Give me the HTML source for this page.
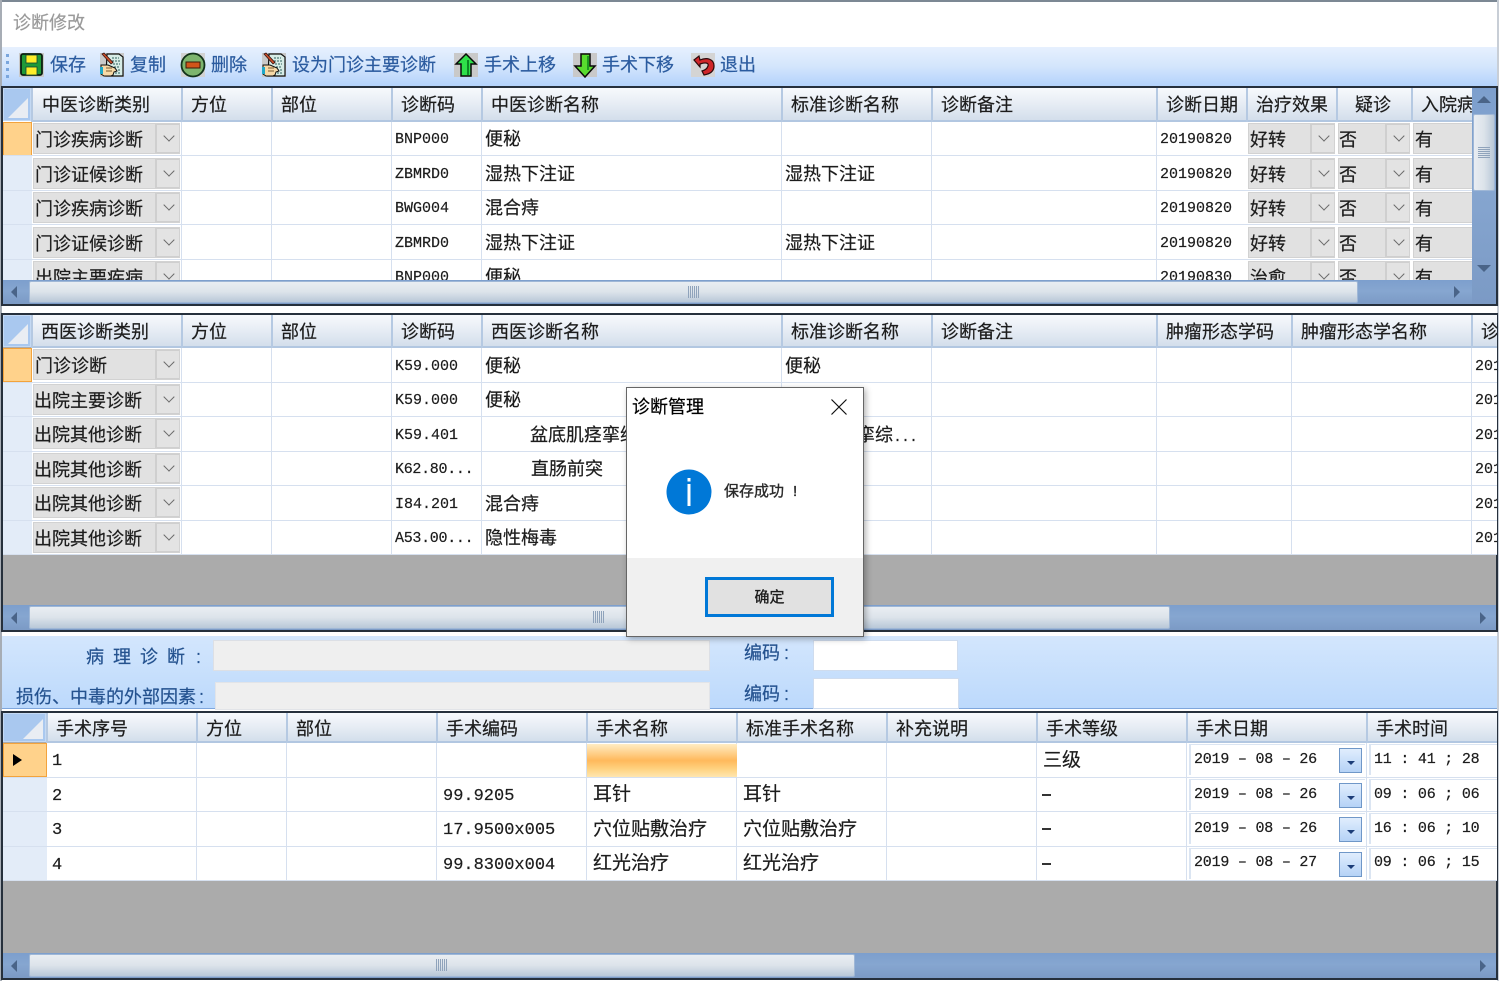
<!DOCTYPE html>
<html><head><meta charset="utf-8"><title>诊断修改</title>
<style>
*{box-sizing:border-box}
html,body{margin:0;padding:0;background:#fff}
body{width:1499px;height:981px;position:relative;overflow:hidden;font:18px/36px "Liberation Sans","Noto Sans CJK SC",sans-serif;color:#1c1c1c;-webkit-text-stroke:.2px;filter:blur(.3px)}
div,span,s,u,em,b{position:absolute;display:block;text-decoration:none;font-style:normal;font-weight:400;white-space:nowrap}
.m{font-family:"Liberation Mono","Noto Sans CJK SC",monospace;font-size:15px;margin-top:1px}
.n{font-size:17px}
.d{white-space:pre;letter-spacing:-.22px}
.tb{color:#2b5b9f;top:47px;line-height:36px;height:34px}
.clip{overflow:hidden}
.bar{background:linear-gradient(#7d9fcd,#86a6d0 45%,#7b9ac5)}
.th{background:linear-gradient(#e9edf2,#dce3ea 50%,#b9c8d8);border:1px solid #9fb7d6;border-radius:2px}
.hd{background:linear-gradient(#f7f9fc,#e6ecf4 50%,#d3deeb);border-bottom:2px solid #b2c7e1}
.hs{top:0;width:2px;background:#b5c9e2}
.v{width:1px;background:#d6e0ef}
.h{height:1px;background:#d6e0ef}
.rh{background:#e3ecf8}
.cur{background:#ffd28b;border:1px solid #f3a33c}
.cor{background:#a9c8ef;border:1px solid #c4d9f3}
.cor:after{content:"";position:absolute;right:2px;bottom:2px;border-left:20px solid transparent;border-bottom:20px solid #e9edf3}
.cb{background:#e1e1e1;height:31px;line-height:32px;overflow:hidden;border:1px solid #d2d2d2;padding-left:1px}
.cb em{right:0;top:0;width:24px;height:29px;background:#e3e3e3;border:2px solid #cfcfcf;border-width:1px 0 1px 2px}
.cb em:after{content:"";position:absolute;left:8px;top:7px;width:7px;height:7px;border:solid #6b6b6b;border-width:0 1px 1px 0;transform:rotate(45deg)}
.lb{color:#24528f}
.dp{background:#fff;border:1px solid #dbe5f2;border-width:1px 0 0 2px;height:31px}
.bt{left:1339px;width:23px;height:25px;background:linear-gradient(#e0edfd,#b5d2f6);border:1px solid #6f97c8}
.bt:after{content:"";position:absolute;left:7px;top:12px;border:4px solid transparent;border-top:4px solid #1c3d78;border-bottom:0}
.al{width:0;height:0;border:6px solid transparent}
.ds{left:1042px;width:9px;height:2px;background:#333}
</style></head><body>

<!-- window frame -->
<div style="left:0;top:0;width:1499px;height:2px;background:#7c8894"></div>
<div style="left:0;top:0;width:2px;height:981px;background:#a7adb5"></div>
<div style="left:1497px;top:0;width:2px;height:981px;background:#c8ced6"></div>
<div style="left:13px;top:5px;color:#9a9a9a">诊断修改</div>

<!-- toolbar -->
<div style="left:2px;top:47px;width:1495px;height:39px;background:linear-gradient(#e6f0fe,#d3e5fc 50%,#b3d2fb)"></div>
<div style="left:6px;top:54px;width:3px;height:3px;background:#7aa6dd;box-shadow:0 7px 0 #7aa6dd,0 14px 0 #7aa6dd,0 21px 0 #7aa6dd"></div>

<svg style="position:absolute;left:0;top:0" width="1499" height="90" viewBox="0 0 1499 90">
<defs>
<g id="doc"><rect width="24" height="24" fill="#c9c9c9"/><path d="M7 1h12l4 3v19H6z" fill="#d7ece6" stroke="#111" stroke-width="1.2"/><path d="M12 5h7M12 8h8M13 11h7M14 14h6M15 17h5M15 20h5" stroke="#2e5f5c" stroke-dasharray="2 1"/><path d="M2 1l9 10 2-1.500L4 0z" fill="#d0512a" stroke="#311" stroke-width=".8"/><path d="M1 12h7l7 3 2 3-3 1-1 3-2 1H4l-3-2z" fill="#f7d9a6" stroke="#111"/><path d="M6 15h6M6 18h6" stroke="#7a5a30"/><rect x="0" y="14" width="3" height="7" fill="#1fa8c8"/></g>
</defs>
<!-- save -->
<rect x="19" y="53" width="25" height="24" fill="#c9c9c9"/>
<rect x="21" y="54" width="21" height="21" rx="2" fill="#1f9a38" stroke="#0b1f10" stroke-width="1.8"/>
<rect x="26" y="55" width="11" height="8" fill="#ffee2a" stroke="#143" stroke-width=".8"/>
<rect x="26" y="67" width="11" height="8" fill="#ffee2a" stroke="#143" stroke-width=".8"/>
<use href="#doc" x="100" y="53"/>
<!-- delete -->
<rect x="181" y="53" width="24" height="24" fill="#d2d2d2"/>
<circle cx="193" cy="65" r="11.500" fill="#7db56e" stroke="#12321a" stroke-width="1.800"/>
<rect x="186" y="62" width="14" height="6" fill="#d0551a" stroke="#3b1a08"/>
<use href="#doc" x="262" y="53"/>
<!-- up -->
<rect x="454" y="53" width="24" height="24" fill="#c9c9c9"/>
<path d="M466 54l10 10h-5v12h-10V64h-5z" fill="#2fe04a" stroke="#0a0a0a" stroke-width="1.500"/>
<path d="M468 60v15" stroke="#0c8a24" stroke-width="2"/>
<!-- down -->
<rect x="573" y="53" width="24" height="24" fill="#c9c9c9"/>
<path d="M581 54h9v12h5l-10 11-10-11h6z" fill="#58dc2e" stroke="#0a0a0a" stroke-width="1.500"/>
<path d="M588 56v14" stroke="#1c9a20" stroke-width="2"/>
<!-- exit -->
<rect x="691" y="53" width="24" height="24" fill="#d4d4d4"/>
<path d="M694 60l6 7v-3c6-2 9-1 8 2-1 3-3 4-6 5l2 4c6-1 10-4 10-9 0-7-7-9-14-6l-1-4z" fill="#d0262a" stroke="#2a0a0c" stroke-width="1.200"/>
</svg>
<div class="tb" style="left:50px">保存</div>
<div class="tb" style="left:130px">复制</div>
<div class="tb" style="left:211px">删除</div>
<div class="tb" style="left:292px">设为门诊主要诊断</div>
<div class="tb" style="left:484px">手术上移</div>
<div class="tb" style="left:602px">手术下移</div>
<div class="tb" style="left:720px">退出</div>

<!-- GRID 1 -->
<div style="left:1px;top:86px;width:1497px;height:220px;background:#fff;border:2px solid #26303c"></div>
<div class="clip" style="left:3px;top:88px;width:1469px;height:192px;">
<div style="left:-3px;top:-88px;width:1499px;height:400px">
 <div class="hd" style="left:32px;top:88px;width:1440px;height:34px"></div>
 <div class="cor" style="left:3px;top:88px;width:28px;height:33px"></div>
 <div class="rh" style="left:3px;top:122px;width:29px;height:160px"></div>
 <div class="cur" style="left:3px;top:122px;width:29px;height:34px"></div>
 <div class="hs" style="left:31px;top:88px;height:34px"></div><div class="hs" style="left:181px;top:88px;height:34px"></div><div class="hs" style="left:271px;top:88px;height:34px"></div><div class="hs" style="left:391px;top:88px;height:34px"></div><div class="hs" style="left:481px;top:88px;height:34px"></div><div class="hs" style="left:781px;top:88px;height:34px"></div><div class="hs" style="left:931px;top:88px;height:34px"></div><div class="hs" style="left:1156px;top:88px;height:34px"></div><div class="hs" style="left:1246px;top:88px;height:34px"></div><div class="hs" style="left:1336px;top:88px;height:34px"></div><div class="hs" style="left:1411px;top:88px;height:34px"></div>
 <u class="v" style="left:181px;top:122px;height:160px"></u><u class="v" style="left:271px;top:122px;height:160px"></u><u class="v" style="left:391px;top:122px;height:160px"></u><u class="v" style="left:481px;top:122px;height:160px"></u><u class="v" style="left:781px;top:122px;height:160px"></u><u class="v" style="left:931px;top:122px;height:160px"></u><u class="v" style="left:1156px;top:122px;height:160px"></u>
 <u class="h" style="left:3px;top:155px;width:1470px"></u><u class="h" style="left:3px;top:190px;width:1470px"></u><u class="h" style="left:3px;top:224px;width:1470px"></u><u class="h" style="left:3px;top:259px;width:1470px"></u>
 <div style="left:42px;top:87px">中医诊断类别</div><div style="left:191px;top:87px">方位</div><div style="left:281px;top:87px">部位</div><div style="left:401px;top:87px">诊断码</div><div style="left:491px;top:87px">中医诊断名称</div><div style="left:791px;top:87px">标准诊断名称</div><div style="left:941px;top:87px">诊断备注</div><div style="left:1166px;top:87px">诊断日期</div><div style="left:1256px;top:87px">治疗效果</div><div style="left:1355px;top:87px">疑诊</div><div style="left:1421px;top:87px">入院病情</div>

 <s class="cb" style="left:33px;top:123px;width:147px">门诊疾病诊断<em></em></s><div class="m" style="left:395px;top:121px">BNP000</div><div style="left:485px;top:121px">便秘</div><div class="m" style="left:1160px;top:121px">20190820</div><s class="cb" style="left:1248px;top:123px;width:87px">好转<em></em></s><s class="cb" style="left:1338px;top:123px;width:72px;padding-left:0">否<em></em></s><s class="cb" style="left:1413px;top:123px;width:62px">有</s>

 <s class="cb" style="left:33px;top:158px;width:147px">门诊证候诊断<em></em></s><div class="m" style="left:395px;top:156px">ZBMRD0</div><div style="left:485px;top:156px">湿热下注证</div><div style="left:785px;top:156px">湿热下注证</div><div class="m" style="left:1160px;top:156px">20190820</div><s class="cb" style="left:1248px;top:158px;width:87px">好转<em></em></s><s class="cb" style="left:1338px;top:158px;width:72px;padding-left:0">否<em></em></s><s class="cb" style="left:1413px;top:158px;width:62px">有</s>

 <s class="cb" style="left:33px;top:192px;width:147px">门诊疾病诊断<em></em></s><div class="m" style="left:395px;top:190px">BWG004</div><div style="left:485px;top:190px">混合痔</div><div class="m" style="left:1160px;top:190px">20190820</div><s class="cb" style="left:1248px;top:192px;width:87px">好转<em></em></s><s class="cb" style="left:1338px;top:192px;width:72px;padding-left:0">否<em></em></s><s class="cb" style="left:1413px;top:192px;width:62px">有</s>

 <s class="cb" style="left:33px;top:227px;width:147px">门诊证候诊断<em></em></s><div class="m" style="left:395px;top:225px">ZBMRD0</div><div style="left:485px;top:225px">湿热下注证</div><div style="left:785px;top:225px">湿热下注证</div><div class="m" style="left:1160px;top:225px">20190820</div><s class="cb" style="left:1248px;top:227px;width:87px">好转<em></em></s><s class="cb" style="left:1338px;top:227px;width:72px;padding-left:0">否<em></em></s><s class="cb" style="left:1413px;top:227px;width:62px">有</s>

 <s class="cb" style="left:33px;top:261px;width:147px">出院主要疾病<em></em></s><div class="m" style="left:395px;top:259px">BNP000</div><div style="left:485px;top:259px">便秘</div><div class="m" style="left:1160px;top:259px">20190830</div><s class="cb" style="left:1248px;top:261px;width:87px">治愈<em></em></s><s class="cb" style="left:1338px;top:261px;width:72px;padding-left:0">否<em></em></s><s class="cb" style="left:1413px;top:261px;width:62px">有</s>
</div></div>
<div class="bar" style="left:3px;top:280px;width:1493px;height:24px"></div>
<div class="bar" style="left:1472px;top:88px;width:24px;height:216px"></div>
<div class="th" style="left:29px;top:281px;width:1329px;height:22px"></div>
<div style="left:688px;top:286px;width:11px;height:12px;background:repeating-linear-gradient(90deg,#8fa3bb 0 1px,transparent 1px 2px)"></div>
<div class="th" style="left:1473px;top:114px;width:22px;height:77px;background:linear-gradient(90deg,#e9edf2,#dce3ea 50%,#b9c8d8)"></div>
<div style="left:1478px;top:147px;width:12px;height:11px;background:repeating-linear-gradient(#8fa3bb 0 1px,transparent 1px 2px)"></div>
<div class="al" style="left:1477px;top:96px;border-width:7px;border-bottom-color:#4a6488;border-top:0"></div>
<div class="al" style="left:1477px;top:265px;border-width:7px;border-top-color:#4a6488;border-bottom:0"></div>
<div class="al" style="left:11px;top:286px;border-right-color:#4a6488;border-left:0"></div>
<div class="al" style="left:1454px;top:286px;border-left-color:#4a6488;border-right:0"></div>

<!-- GRID 2 -->
<div style="left:1px;top:313px;width:1497px;height:319px;background:#ababab;border:2px solid #26303c"></div>
<div class="clip" style="left:3px;top:315px;width:1494px;height:290px;">
<div style="left:-3px;top:-315px;width:1499px;height:700px">
 <div style="left:32px;top:348px;width:1470px;height:207px;background:#fff"></div>
 <div class="hd" style="left:32px;top:315px;width:1470px;height:33px"></div>
 <div class="cor" style="left:3px;top:315px;width:28px;height:32px"></div>
 <div class="rh" style="left:3px;top:348px;width:29px;height:207px"></div>
 <div class="cur" style="left:3px;top:348px;width:29px;height:34px"></div>
 <div class="hs" style="left:31px;top:315px;height:33px"></div><div class="hs" style="left:181px;top:315px;height:33px"></div><div class="hs" style="left:271px;top:315px;height:33px"></div><div class="hs" style="left:391px;top:315px;height:33px"></div><div class="hs" style="left:481px;top:315px;height:33px"></div><div class="hs" style="left:781px;top:315px;height:33px"></div><div class="hs" style="left:931px;top:315px;height:33px"></div><div class="hs" style="left:1156px;top:315px;height:33px"></div><div class="hs" style="left:1291px;top:315px;height:33px"></div><div class="hs" style="left:1471px;top:315px;height:33px"></div>
 <u class="v" style="left:181px;top:348px;height:207px"></u><u class="v" style="left:271px;top:348px;height:207px"></u><u class="v" style="left:391px;top:348px;height:207px"></u><u class="v" style="left:481px;top:348px;height:207px"></u><u class="v" style="left:781px;top:348px;height:207px"></u><u class="v" style="left:931px;top:348px;height:207px"></u><u class="v" style="left:1156px;top:348px;height:207px"></u><u class="v" style="left:1291px;top:348px;height:207px"></u><u class="v" style="left:1471px;top:348px;height:207px"></u>
 <u class="h" style="left:3px;top:382px;width:1494px"></u><u class="h" style="left:3px;top:416px;width:1494px"></u><u class="h" style="left:3px;top:451px;width:1494px"></u><u class="h" style="left:3px;top:485px;width:1494px"></u><u class="h" style="left:3px;top:520px;width:1494px"></u><u class="h" style="left:3px;top:554px;width:1494px"></u>
 <div style="left:41px;top:314px">西医诊断类别</div><div style="left:191px;top:314px">方位</div><div style="left:281px;top:314px">部位</div><div style="left:401px;top:314px">诊断码</div><div style="left:491px;top:314px">西医诊断名称</div><div style="left:791px;top:314px">标准诊断名称</div><div style="left:941px;top:314px">诊断备注</div><div style="left:1166px;top:314px">肿瘤形态学码</div><div style="left:1301px;top:314px">肿瘤形态学名称</div><div style="left:1481px;top:314px">诊断日期</div>

 <s class="cb" style="left:33px;top:349px;width:147px">门诊诊断<em></em></s><div class="m" style="left:395px;top:348px">K59.000</div><div style="left:485px;top:348px">便秘</div><div style="left:785px;top:348px">便秘</div><div class="m" style="left:1475px;top:348px">20190820</div>
 <s class="cb" style="left:33px;top:384px;width:147px;padding-left:0">出院主要诊断<em></em></s><div class="m" style="left:395px;top:382px">K59.000</div><div style="left:485px;top:382px">便秘</div><div class="m" style="left:1475px;top:382px">20190820</div>
 <s class="cb" style="left:33px;top:418px;width:147px;padding-left:0">出院其他诊断<em></em></s><div class="m" style="left:395px;top:417px">K59.401</div><div style="left:530px;top:417px">盆底肌痉挛综合征</div><div style="left:785px;top:417px">盆底肌痉挛综</div><div style="left:895px;top:417px;letter-spacing:3px">...</div><div class="m" style="left:1475px;top:417px">20190820</div>
 <s class="cb" style="left:33px;top:453px;width:147px;padding-left:0">出院其他诊断<em></em></s><div class="m" style="left:395px;top:451px;letter-spacing:-.3px">K62.80...</div><div style="left:531px;top:451px">直肠前突</div><div class="m" style="left:1475px;top:451px">20190820</div>
 <s class="cb" style="left:33px;top:487px;width:147px;padding-left:0">出院其他诊断<em></em></s><div class="m" style="left:395px;top:486px">I84.201</div><div style="left:485px;top:486px">混合痔</div><div class="m" style="left:1475px;top:486px">20190820</div>
 <s class="cb" style="left:33px;top:522px;width:147px;padding-left:0">出院其他诊断<em></em></s><div class="m" style="left:395px;top:520px;letter-spacing:-.3px">A53.00...</div><div style="left:485px;top:520px">隐性梅毒</div><div class="m" style="left:1475px;top:520px">20190820</div>
</div></div>
<div class="bar" style="left:3px;top:605px;width:1493px;height:25px"></div>
<div class="th" style="left:29px;top:606px;width:1141px;height:23px"></div>
<div style="left:593px;top:611px;width:11px;height:12px;background:repeating-linear-gradient(90deg,#8fa3bb 0 1px,transparent 1px 2px)"></div>
<div class="al" style="left:11px;top:612px;border-right-color:#4a6488;border-left:0"></div>
<div class="al" style="left:1480px;top:612px;border-left-color:#4a6488;border-right:0"></div>

<!-- panel -->
<div style="left:2px;top:636px;width:1495px;height:73px;background:linear-gradient(#d3e6fd,#bcd9fc);border-bottom:1px solid #7ea6dc"></div>
<div style="left:213px;top:640px;width:497px;height:31px;background:#efefef;border:1px solid #dcdfe5"></div>
<div style="left:215px;top:682px;width:495px;height:28px;background:#efefef;border:1px solid #e2e4e8"></div>
<div style="left:813px;top:640px;width:145px;height:31px;background:#fff;border:1px solid #cfdcee"></div>
<div style="left:813px;top:678px;width:146px;height:31px;background:#fff;border:1px solid #cfdcee"></div>
<div class="lb" style="left:86px;top:639px;letter-spacing:9px">病理诊断</div>
<div class="lb" style="left:196px;top:639px">:</div>
<div class="lb" style="left:16px;top:679px">损伤、中毒的外部因素</div>
<div class="lb" style="left:199px;top:679px">:</div>
<div class="lb" style="left:744px;top:635px">编码</div>
<div class="lb" style="left:784px;top:635px">:</div>
<div class="lb" style="left:744px;top:676px">编码</div>
<div class="lb" style="left:784px;top:676px">:</div>

<!-- GRID 3 -->
<div style="left:1px;top:711px;width:1497px;height:269px;background:#ababab;border:2px solid #26303c"></div>
<div class="clip" style="left:3px;top:713px;width:1494px;height:240px">
<div style="left:-3px;top:-713px;width:1499px;height:981px">
 <div style="left:47px;top:743px;width:1452px;height:138px;background:#fff"></div>
 <div class="hd" style="left:47px;top:713px;width:1452px;height:30px"></div>
 <div class="cor" style="left:3px;top:713px;width:43px;height:29px"></div>
 <div class="rh" style="left:3px;top:743px;width:44px;height:138px"></div>
 <div class="cur" style="left:3px;top:743px;width:44px;height:34px"></div>
 <div class="al" style="left:13px;top:754px;border-left-color:#000;border-right:0;border-width:6px 0 6px 9px"></div>
 <div class="hs" style="left:46px;top:713px;height:30px"></div><div class="hs" style="left:196px;top:713px;height:30px"></div><div class="hs" style="left:286px;top:713px;height:30px"></div><div class="hs" style="left:436px;top:713px;height:30px"></div><div class="hs" style="left:586px;top:713px;height:30px"></div><div class="hs" style="left:736px;top:713px;height:30px"></div><div class="hs" style="left:886px;top:713px;height:30px"></div><div class="hs" style="left:1036px;top:713px;height:30px"></div><div class="hs" style="left:1186px;top:713px;height:30px"></div><div class="hs" style="left:1366px;top:713px;height:30px"></div>
 <u class="v" style="left:196px;top:743px;height:138px"></u><u class="v" style="left:286px;top:743px;height:138px"></u><u class="v" style="left:436px;top:743px;height:138px"></u><u class="v" style="left:586px;top:743px;height:138px"></u><u class="v" style="left:736px;top:743px;height:138px"></u><u class="v" style="left:886px;top:743px;height:138px"></u><u class="v" style="left:1036px;top:743px;height:138px"></u><u class="v" style="left:1186px;top:743px;height:138px"></u><u class="v" style="left:1366px;top:743px;height:138px"></u>
 <u class="h" style="left:3px;top:777px;width:1494px"></u><u class="h" style="left:3px;top:811px;width:1494px"></u><u class="h" style="left:3px;top:846px;width:1494px"></u><u class="h" style="left:3px;top:880px;width:1494px"></u>
 <div style="left:56px;top:711px">手术序号</div><div style="left:206px;top:711px">方位</div><div style="left:296px;top:711px">部位</div><div style="left:446px;top:711px">手术编码</div><div style="left:596px;top:711px">手术名称</div><div style="left:746px;top:711px">标准手术名称</div><div style="left:896px;top:711px">补充说明</div><div style="left:1046px;top:711px">手术等级</div><div style="left:1196px;top:711px">手术日期</div><div style="left:1376px;top:711px">手术时间</div>

 <div style="left:587px;top:744px;width:150px;height:33px;background:linear-gradient(#ffedc4,#ffb95c 50%,#ffd27f 75%,#ffe6b0)"></div>
 <div class="m n" style="left:52px;top:743px">1</div><div style="left:1043px;top:743px;font-size:19px">三级</div>
 <div class="dp" style="left:1189px;top:744px;width:176px"></div><div class="bt" style="top:748px"></div><div class="m d" style="left:1194px;top:741px">2019 – 08 – 26</div>
 <div class="dp" style="left:1369px;top:744px;width:130px"></div><div class="m d" style="left:1374px;top:741px">11 : 41 ; 28</div>

 <div class="m n" style="left:52px;top:778px">2</div><div class="m n" style="left:443px;top:778px">99.9205</div><div style="left:593px;top:777px;font-size:19px">耳针</div><div style="left:743px;top:777px;font-size:19px">耳针</div><div class="ds" style="top:794px"></div>
 <div class="dp" style="left:1189px;top:779px;width:176px"></div><div class="bt" style="top:783px"></div><div class="m d" style="left:1194px;top:776px">2019 – 08 – 26</div>
 <div class="dp" style="left:1369px;top:779px;width:130px"></div><div class="m d" style="left:1374px;top:776px">09 : 06 ; 06</div>

 <div class="m n" style="left:52px;top:812px">3</div><div class="m n" style="left:443px;top:812px">17.9500x005</div><div style="left:593px;top:812px;font-size:19px">穴位贴敷治疗</div><div style="left:743px;top:812px;font-size:19px">穴位贴敷治疗</div><div class="ds" style="top:828px"></div>
 <div class="dp" style="left:1189px;top:813px;width:176px"></div><div class="bt" style="top:817px"></div><div class="m d" style="left:1194px;top:810px">2019 – 08 – 26</div>
 <div class="dp" style="left:1369px;top:813px;width:130px"></div><div class="m d" style="left:1374px;top:810px">16 : 06 ; 10</div>

 <div class="m n" style="left:52px;top:847px">4</div><div class="m n" style="left:443px;top:847px">99.8300x004</div><div style="left:593px;top:846px;font-size:19px">红光治疗</div><div style="left:743px;top:846px;font-size:19px">红光治疗</div><div class="ds" style="top:863px"></div>
 <div class="dp" style="left:1189px;top:848px;width:176px"></div><div class="bt" style="top:852px"></div><div class="m d" style="left:1194px;top:844px">2019 – 08 – 27</div>
 <div class="dp" style="left:1369px;top:848px;width:130px"></div><div class="m d" style="left:1374px;top:844px">09 : 06 ; 15</div>
</div></div>
<div class="bar" style="left:3px;top:953px;width:1493px;height:25px"></div>
<div class="th" style="left:29px;top:954px;width:826px;height:23px"></div>
<div style="left:436px;top:959px;width:11px;height:12px;background:repeating-linear-gradient(90deg,#8fa3bb 0 1px,transparent 1px 2px)"></div>
<div class="al" style="left:11px;top:960px;border-right-color:#4a6488;border-left:0"></div>
<div class="al" style="left:1480px;top:960px;border-left-color:#4a6488;border-right:0"></div>

<!-- dialog -->
<div style="left:626px;top:387px;width:238px;height:250px;background:#fff;border:1px solid #666;box-shadow:2px 2px 6px rgba(0,0,0,.3)">
 <div style="left:0;top:170px;width:236px;height:78px;background:#f0f0f0"></div>
 <div style="left:5px;top:1px;color:#000">诊断管理</div>
 <svg style="position:absolute;left:203px;top:10px" width="18" height="18"><path d="M1.500 1.500l15 15M16.500 1.500l-15 15" stroke="#111" stroke-width="1.200" fill="none"/></svg>
 <svg style="position:absolute;left:39px;top:81px" width="46" height="46"><circle cx="23" cy="23" r="22.500" fill="#0078d7"/><rect x="21.500" y="9" width="3" height="3.500" fill="#fff"/><rect x="21.500" y="15" width="3" height="22" fill="#fff"/></svg>
 <div style="left:97px;top:86px;font-size:15px;color:#2a2a2a;-webkit-text-stroke:.35px">保存成功</div>
 <div style="left:166px;top:86px;font-size:15px;color:#2a2a2a;-webkit-text-stroke:.35px">!</div>
 <div style="left:78px;top:189px;width:129px;height:40px;background:#e1e1e1;border:3px solid #0078d7;text-align:center;font-size:15px;line-height:36px;-webkit-text-stroke:.35px">确定</div>
</div>
</body></html>
